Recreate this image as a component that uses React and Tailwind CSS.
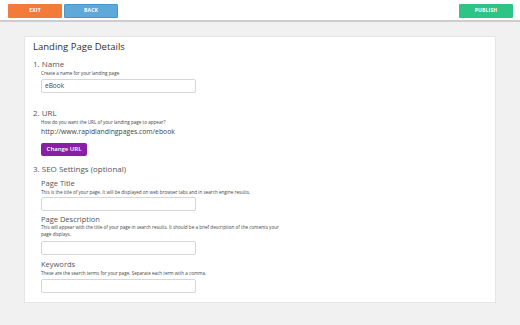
import React from 'react';

// トップバーのボタン
function TopButton({ label, className }) {
  return (
    <button className={`block h-[14px] w-[54px] rounded-[1px] text-[5px] font-bold uppercase tracking-[0.2px] text-white ${className}`}>
      {label}
    </button>
  );
}

// 入力欄
function Field({ value, className = '' }) {
  return (
    <div className={`w-[155px] h-[14px] border border-[#d6d6d6] rounded-[2px] bg-white px-[3px] flex items-center text-[6.5px] text-[#444] ${className}`}>
      {value}
    </div>
  );
}

function App() {
  return (
    <div className="w-[520px] h-[325px] bg-[#f1f1f1] overflow-hidden" style={{ fontFamily: '"Open Sans", "Noto Sans", sans-serif' }}>
      {/* トップバー */}
      <div className="h-[22px] bg-white border-b-2 border-[#cdcdcd] flex items-start pt-[4px] pl-[8px] pr-[7px]">
        <div className="flex gap-[2px]">
          <TopButton label="Exit" className="bg-[#f37b3a]" />
          <TopButton label="Back" className="bg-[#5ea8da] border border-[#4b94c6]" />
        </div>
        <div className="ml-auto flex">
          <TopButton label="Publish" className="bg-[#2dc486]" />
        </div>
      </div>

      {/* カード */}
      <div className="ml-[24px] mt-[14px] w-[472px] bg-white border border-[#e6e6e6] pl-[8px] pt-[4px] pb-[9px]">
        <h1 className="text-[9.5px] leading-[12px] text-[#2f2f2f]">Landing Page Details</h1>

        <div className="mt-[6px] text-[8px] leading-[10px] text-[#555]">1. Name</div>
        <div className="pl-[8px]">
          <p className="mt-[1px] text-[4.6px] leading-[6px] text-[#444]">Create a name for your landing page</p>
          <Field value="eBook" className="mt-[3px] h-[13px]" />
        </div>

        <div className="mt-[15px] text-[8px] leading-[10px] text-[#555]">2. URL</div>
        <div className="pl-[8px]">
          <p className="mt-[1px] text-[4.6px] leading-[6px] text-[#444]">How do you want the URL of your landing page to appear?</p>
          <p className="mt-[2px] text-[6.8px] leading-[10px] text-[#444]">http://www.rapidlandingpages.com/ebook</p>
          <button className="block mt-[6px] h-[13px] w-[46px] rounded-[2px] bg-[#8a1fa6] text-[6px] font-semibold text-white">
            Change URL
          </button>
        </div>

        <div className="mt-[8px] text-[8px] leading-[10px] text-[#555]">3. SEO Settings (optional)</div>
        <div className="pl-[8px]">
          <div className="mt-[4px] text-[7.5px] leading-[10px] text-[#555]">Page Title</div>
          <p className="mt-[1px] text-[4.6px] leading-[6px] text-[#444]">This is the title of your page. It will be displayed on web browser tabs and in search engine results.</p>
          <Field className="mt-[2px]" />

          <div className="mt-[4px] text-[7.5px] leading-[9px] text-[#555]">Page Description</div>
          <p className="text-[4.6px] leading-[7px] text-[#444] whitespace-nowrap">
            This will appear with the title of your page in search results. It should be a brief description of the contents your
            <br />
            page displays.
          </p>
          <Field className="mt-[3px] h-[13px]" />

          <div className="mt-[5px] text-[7.5px] leading-[9px] text-[#555]">Keywords</div>
          <p className="mt-[1px] text-[4.6px] leading-[6px] text-[#444]">These are the search terms for your page. Separate each term with a comma.</p>
          <Field className="mt-[3px]" />
        </div>
      </div>
    </div>
  );
}

export default App;
